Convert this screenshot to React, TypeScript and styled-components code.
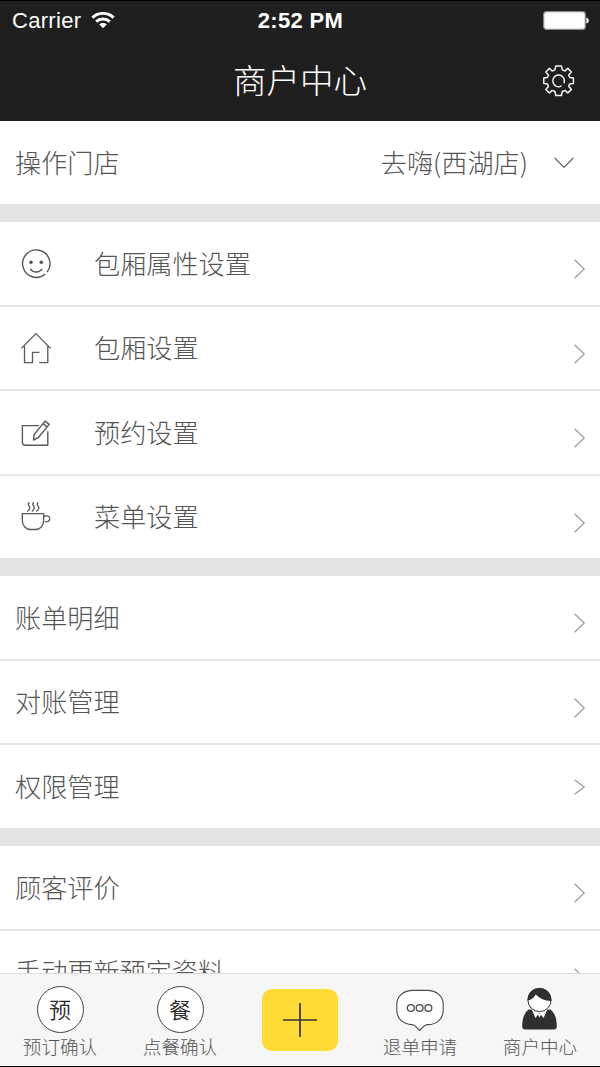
import React from "react";
import styled, { createGlobalStyle } from "styled-components";

const GlobalStyle = createGlobalStyle`
  * { box-sizing: border-box; }
  html, body { margin: 0; padding: 0; background: #fff; }
  body { overflow: hidden; }
  svg { display: block; flex: none; }
`;

const Screen = styled.div`
  width: 600px;
  height: 1067px;
  display: flex;
  flex-direction: column;
  overflow: hidden;
  background: #fff;
  color: #555;
  font-family: "Noto Sans CJK SC", sans-serif;
  font-weight: 300;
  border-top: 1px solid #000;
  border-bottom: 1px solid #000;
`;

const Header = styled.header`
  flex: none;
  height: 120px;
  background: #1f1f1f;
  color: #fff;
`;

const StatusBar = styled.div`
  height: 39px;
  display: grid;
  grid-template-columns: 1fr auto 1fr;
  align-items: center;
  padding: 0 11px 0 12px;
  font-family: "Liberation Sans", Arial, sans-serif;
  font-size: 22px;
  line-height: 39px;
`;

const Carrier = styled.div`
  display: flex;
  align-items: center;
  gap: 10px;
  font-weight: 400;
  letter-spacing: 0.3px;
`;

const Clock = styled.div`
  font-weight: 700;
  letter-spacing: 0.35px;
`;

const BatterySlot = styled.div`
  display: flex;
  justify-content: flex-end;
`;

const NavBar = styled.div`
  height: 81px;
  display: grid;
  grid-template-columns: 1fr auto 1fr;
  align-items: center;
  padding: 0 25px;
`;

const Title = styled.h1`
  grid-column: 2;
  margin: 0;
  padding-bottom: 4px;
  font-size: 33.5px;
  font-weight: 300;
  line-height: 77px;
`;

const SettingsButton = styled.div`
  justify-self: end;
`;

const Content = styled.main`
  flex: 1;
  min-height: 0;
  overflow: hidden;
`;

const Band = styled.div`
  height: 18px;
  background: #e4e4e4;
`;

const Row = styled.div<{ $height: number; $line?: boolean }>`
  display: flex;
  align-items: center;
  box-sizing: content-box;
  height: ${(p) => p.$height}px;
  padding: 0 14px 0 15px;
  border-bottom: ${(p) => (p.$line ? "2px solid #e7e7e7" : "none")};
`;

const RowIcon = styled.div`
  width: 79px;
  padding-left: 5px;
`;

const Label = styled.span`
  flex: 1;
  padding-bottom: 2px;
  font-size: 26.15px;
  line-height: 38px;
  white-space: nowrap;
`;

const Store = styled.span`
  padding-bottom: 2px;
  font-size: 26.15px;
  line-height: 38px;
  margin-right: 26px;
`;

const DownSlot = styled.div`
  margin-right: 12px;
`;

const ArrowSlot = styled.div<{ $drop: number }>`
  padding-top: ${(p) => p.$drop * 2}px;
`;

const TabBar = styled.nav`
  flex: none;
  height: 93px;
  display: grid;
  grid-template-columns: repeat(5, 120px);
  background: #f6f6f6;
  border-top: 1px solid #dcdcdc;
`;

const Tab = styled.div`
  display: flex;
  flex-direction: column;
  align-items: center;
  padding-top: 12px;
`;

const TabIcon = styled.div`
  height: 47px;
  display: flex;
  align-items: flex-start;
`;

const TabLabel = styled.span`
  font-size: 18.6px;
  line-height: 26px;
`;

const Badge = styled.div`
  width: 47px;
  height: 47px;
  border: 1px solid #444;
  border-radius: 50%;
  background: #fff;
  color: #2a2a2a;
  font-size: 22px;
  font-weight: 350;
  line-height: 42px;
  text-align: center;
`;

const AddButton = styled.div`
  width: 76px;
  height: 62px;
  margin-top: 3px;
  border-radius: 10px;
  background: #ffdc35;
  display: flex;
  align-items: center;
  justify-content: center;
`;

const Wifi = () => (
  <svg width="24" height="18" viewBox="0 0 24 18" fill="none" stroke="#fff" strokeWidth="2.9">
    <path d="M1.4 5.6C7.2 0 16.8 0 22.6 5.6" />
    <path d="M5.2 9.6C9 6.1 15 6.1 18.8 9.6" />
    <path d="M12 16.2L8.3 12.5C10.3 10.6 13.7 10.6 15.7 12.5Z" fill="#fff" stroke="none" />
  </svg>
);

const Battery = () => (
  <svg width="46" height="19" viewBox="0 0 46 19">
    <rect x=".7" y=".7" width="41.6" height="17.6" rx="2.6" fill="#fff" stroke="#8b8b8b" strokeWidth="1.2" />
    <path d="M43.4 6.4C46.6 7.3 46.6 11.7 43.4 12.6Z" fill="#fff" />
  </svg>
);

const Gear = () => (
  <svg width="32" height="32" viewBox="0.4 0.3 32 32" fill="none" stroke="#f4f4f4" strokeWidth="1.5" strokeLinejoin="round" strokeLinecap="round">
    <path d="M13.2 1.2H18.8L19.7 5.2L22.4 6.3L25.2 3.7L28.8 7.3L26.1 10.4L27.2 12.8L30.8 13.2V18.8L27.2 19.2L26.1 21.6L28.8 24.7L25.2 28.3L22.4 25.7L19.7 26.8L18.8 30.8H13.2L12.3 26.8L9.6 25.7L6.8 28.3L3.2 24.7L5.9 21.6L4.8 19.2L1.2 18.8V13.2L4.8 12.8L5.9 10.4L3.2 7.3L6.8 3.7L9.6 6.3L12.3 5.2Z" />
    <path d="M18.5 21.4A5.8 5.8 0 1 1 21.5 18" />
  </svg>
);

const Smile = () => (
  <svg width="32" height="30" viewBox="0 0 32 30" fill="none" stroke="#555" strokeWidth="1.4">
    <path d="M25.3 25A13.7 13.7 0 1 1 27.1 23.1" />
    <circle cx="11" cy="13.2" r="1.8" fill="#555" stroke="none" />
    <circle cx="21.3" cy="13.2" r="1.8" fill="#555" stroke="none" />
    <path d="M10.2 19.9C13.2 24.1 19.2 24.1 22.2 19.9" />
  </svg>
);

const House = () => (
  <svg width="32" height="32" viewBox="0 0 32 32" fill="none" stroke="#5a5a5a" strokeWidth="1.3">
    <path d="M1.4 16.4L15.9 1.6L30.6 16.4M4.5 14V30.6H12.5V20.4H19.5M19.2 30.6H27.8V14" />
  </svg>
);

const Pencil = () => (
  <svg width="32" height="28" viewBox="0 -0.4 32 28" fill="none" stroke="#5a5a5a" strokeWidth="1.4" strokeLinejoin="round">
    <path d="M18.9 6.2H2.4V22.9Q2.4 25.9 5.4 25.9H27.8V11.8" />
    <path d="M25.1 1.7L29.2 5L18.2 18.3L13.6 20.6L14 15.3ZM23.1 4.2L27.2 7.5" />
  </svg>
);

const Cup = () => (
  <svg width="32" height="30" viewBox="0 0.8 32 30" fill="none" stroke="#5a5a5a" strokeWidth="1.3">
    <path d="M2.3 12.4H23.7V18.8C23.7 24.8 20 28.3 15.5 28.3H10.5C6 28.3 2.3 24.8 2.3 18.8Z" />
    <path d="M23.8 15.6C26 13.7 29.8 14.7 29.8 17.5C29.8 20.1 27 21.2 24.6 20.3" />
    <path d="M9.4 1.2C6 3.6 10.8 5 9.7 7.3Q9.1 9 7.3 10.2M13.9 1.2C10.5 3.6 15.3 5 14.2 7.3Q13.6 9 11.8 10.2M18.4 1.2C15 3.6 19.8 5 18.7 7.3Q18.1 9 16.3 10.2" />
  </svg>
);

const ChevronRight = ({ height = 20 }: { height?: number }) => (
  <svg width="12" height={height} viewBox={`0 0 12 ${height}`} fill="none" stroke="#999" strokeWidth="1.2">
    <path d={`M.6 .8L10.2 ${height / 2}L.6 ${height - 0.8}`} />
  </svg>
);

const ChevronDown = () => (
  <svg width="20" height="12" viewBox="0 0 20 12" fill="none" stroke="#666" strokeWidth="1.3">
    <path d="M.8 1L10 10.4L19.2 1" />
  </svg>
);

const Plus = () => (
  <svg width="34" height="34" viewBox="0 0 34 34" stroke="#333" strokeWidth="1.7">
    <path d="M17 0V34M0 17H34" />
  </svg>
);

const Bubble = () => (
  <svg width="48" height="47" viewBox="0 -1.7 48 47" stroke="#4a4a4a" strokeWidth="1.1">
    <path fill="#fff" d="M17 2.7H31C40.5 2.7 47.2 8.8 47.2 16V22.5C47.2 31 41 36.8 31.5 36.9Q29.5 36.9 28 38.5L23.6 42.8L19.3 38.5Q17.7 36.9 16 36.9C7 36.5.8 31 .8 22.5V16C.8 8.8 7.5 2.7 17 2.7Z" />
    <g fill="none" strokeWidth="1.3">
      <circle cx="14.8" cy="20.3" r="3.4" />
      <circle cx="23.6" cy="20.3" r="3.4" />
      <circle cx="32.4" cy="20.3" r="3.4" />
    </g>
  </svg>
);

const Person = () => (
  <svg width="36" height="45" viewBox="0.5 -1 36 45">
    <path fill="#303030" d="M7 22.5H29C33.5 26 35.3 32 35.3 39.5Q35.3 42.5 32.3 42.5H3.7Q.7 42.5 .7 39.5C.7 32 2.5 26 7 22.5Z" />
    <path fill="#fff" d="M9.6 21L13.9 31L18 25.8L22.1 31L26.4 21Z" />
    <path fill="#fff" d="M15.8 26.5L18 30.5L20.2 26.5Z" />
    <circle cx="18" cy="13" r="11.6" fill="#fff" stroke="#303030" strokeWidth="1" />
    <path fill="#303030" d="M6.2 13.5C5.5-3.2 30.5-3.2 29.8 13.9C23.5 14 18.5 11.8 14.2 7.6C12.5 11.2 9.8 12.8 6.2 13.5Z" />
  </svg>
);

type Item = {
  label: string;
  height: number;
  icon?: React.ReactNode;
  line?: boolean;
  drop?: number;
  arrow?: number;
};

const groups: Item[][] = [
  [
    { label: "包厢属性设置", height: 83, icon: <Smile />, line: true },
    { label: "包厢设置", height: 82, icon: <House />, line: true },
    { label: "预约设置", height: 83, icon: <Pencil />, line: true },
    { label: "菜单设置", height: 82, icon: <Cup /> },
  ],
  [
    { label: "账单明细", height: 83, line: true },
    { label: "对账管理", height: 82, line: true },
    { label: "权限管理", height: 83, drop: 0.5, arrow: 16 },
  ],
  [
    { label: "顾客评价", height: 83, line: true },
    { label: "手动更新预定资料", height: 82 },
  ],
];

export default function App() {
  return (
    <>
      <GlobalStyle />
      <Screen>
        <Header>
          <StatusBar>
            <Carrier>
              Carrier
              <Wifi />
            </Carrier>
            <Clock>2:52 PM</Clock>
            <BatterySlot>
              <Battery />
            </BatterySlot>
          </StatusBar>
          <NavBar>
            <Title>商户中心</Title>
            <SettingsButton>
              <Gear />
            </SettingsButton>
          </NavBar>
        </Header>
        <Content>
          <Row $height={83}>
            <Label>操作门店</Label>
            <Store>去嗨(西湖店)</Store>
            <DownSlot>
              <ChevronDown />
            </DownSlot>
          </Row>
          {groups.map((items, index) => (
            <React.Fragment key={index}>
              <Band />
              {items.map((item) => (
                <Row key={item.label} $height={item.height} $line={item.line}>
                  {item.icon && <RowIcon>{item.icon}</RowIcon>}
                  <Label>{item.label}</Label>
                  <ArrowSlot $drop={item.drop ?? 5.5}>
                    <ChevronRight height={item.arrow} />
                  </ArrowSlot>
                </Row>
              ))}
            </React.Fragment>
          ))}
        </Content>
        <TabBar>
          <Tab>
            <TabIcon>
              <Badge>预</Badge>
            </TabIcon>
            <TabLabel>预订确认</TabLabel>
          </Tab>
          <Tab>
            <TabIcon>
              <Badge>餐</Badge>
            </TabIcon>
            <TabLabel>点餐确认</TabLabel>
          </Tab>
          <Tab>
            <AddButton>
              <Plus />
            </AddButton>
          </Tab>
          <Tab>
            <TabIcon>
              <Bubble />
            </TabIcon>
            <TabLabel>退单申请</TabLabel>
          </Tab>
          <Tab>
            <TabIcon>
              <Person />
            </TabIcon>
            <TabLabel>商户中心</TabLabel>
          </Tab>
        </TabBar>
      </Screen>
    </>
  );
}
